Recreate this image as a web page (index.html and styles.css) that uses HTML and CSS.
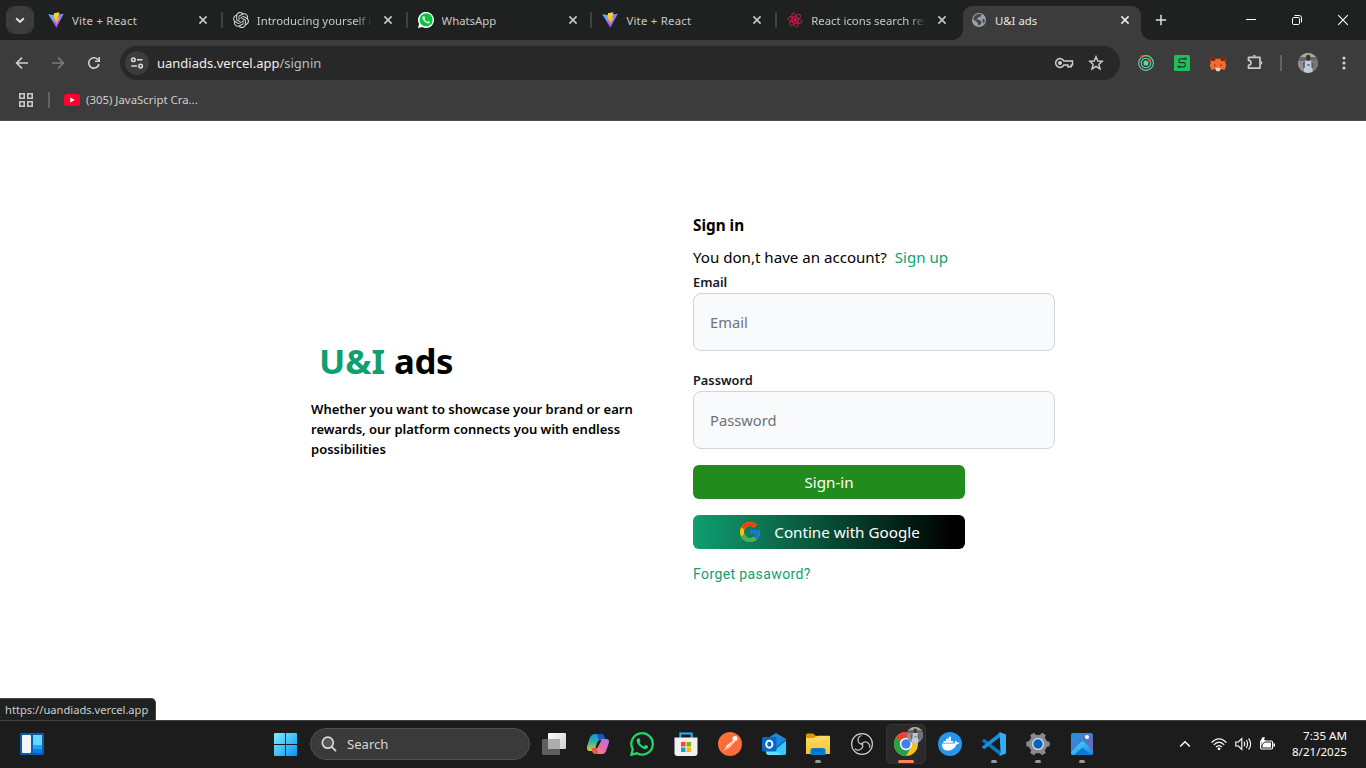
FILE: index.html
```html
<!DOCTYPE html>
<html lang="en">
<head>
<meta charset="utf-8">
<title>U&amp;I ads</title>
<link rel="stylesheet" href="styles.css">
</head>
<body>
<svg class="defs" width="0" height="0">
  <defs>
    <linearGradient id="viteBlue" x1="0" y1="0" x2=".6" y2="1"><stop offset="0" stop-color="#41d1ff"/><stop offset="1" stop-color="#bd34fe"/></linearGradient>
    <linearGradient id="viteGold" x1="0" y1="0" x2="0" y2="1"><stop offset="0" stop-color="#ffdd35"/><stop offset="1" stop-color="#ffa800"/></linearGradient>
    <linearGradient id="winBlue" x1="0" y1="0" x2="1" y2="1"><stop offset="0" stop-color="#7cf0ff"/><stop offset="1" stop-color="#0a93f5"/></linearGradient>
    <linearGradient id="pane" x1="0" y1="0" x2="1" y2="1"><stop offset="0" stop-color="#fff"/><stop offset="1" stop-color="#cfcfcf"/></linearGradient>
    <linearGradient id="copA" x1="0" y1="0" x2="0" y2="1"><stop offset="0" stop-color="#168fe8"/><stop offset=".5" stop-color="#35b6a0"/><stop offset="1" stop-color="#e6cf2e"/></linearGradient>
    <linearGradient id="copB" x1="1" y1="0" x2="0" y2="1"><stop offset="0" stop-color="#a972f0"/><stop offset=".5" stop-color="#ee6aa5"/><stop offset="1" stop-color="#ffa24b"/></linearGradient>
    <linearGradient id="folder" x1="0" y1="0" x2="0" y2="1"><stop offset="0" stop-color="#ffdc6b"/><stop offset="1" stop-color="#fcbf28"/></linearGradient>
    <linearGradient id="photoBg" x1="0" y1="0" x2="1" y2="1"><stop offset="0" stop-color="#169be6"/><stop offset=".6" stop-color="#5a6fc8"/><stop offset="1" stop-color="#9b4fb5"/></linearGradient>
    <linearGradient id="photoHill" x1="0" y1="0" x2="1" y2="1"><stop offset="0" stop-color="#46e3ff"/><stop offset="1" stop-color="#1784de"/></linearGradient>
    <clipPath id="avatarClip"><circle cx="10" cy="10" r="10"/></clipPath>
    <symbol id="vite" viewBox="0 0 16 16">
      <path d="M.3 2.2 5.5 3 8 2.8 15.8 1.8 8.4 15.8Z" fill="url(#viteBlue)"/>
      <path d="M11.4.2 6 1.2 5.5 7.7 7.4 7.3 6.9 10 8.5 9.5 7.8 12.8 11.8 5.7 10 6Z" fill="url(#viteGold)"/>
    </symbol>
    <symbol id="close" viewBox="0 0 10 10"><path d="M1.4 1.4 8.6 8.6M8.6 1.4 1.4 8.6" stroke="currentColor" stroke-width="1.6" fill="none"/></symbol>
    <symbol id="avatar" viewBox="0 0 20 20">
      <g clip-path="url(#avatarClip)">
        <rect width="20" height="20" fill="#8b8c8c"/><rect width="20" height="5" fill="#aaa99d"/>
        <rect y="4" width="20" height="4" fill="#5e6c66"/><rect x="14" y="7" width="6" height="13" fill="#77747d"/><rect y="8" width="5" height="12" fill="#92918f"/>
        <path d="M6 20V10L7.500 7.500H13L14.500 10V20Z" fill="#c3cbe0"/><path d="M5 10 7 8.500 6.700 15H5.300ZM13.300 8.500 15 10V15H13.500Z" fill="#5d545b"/>
        <ellipse cx="10.200" cy="4.800" rx="2.200" ry="3" fill="#3d3337"/><path d="M9 11H12V13H9Z" fill="#7b86ad"/>
      </g>
    </symbol>
  </defs>
</svg>

<header class="browser">
  <div class="tabstrip">
    <div class="tab-search"><svg width="10" height="7" viewBox="0 0 10 7"><path d="M1.2 1.3 5 5 8.8 1.3" fill="none" stroke="#e6e6e6" stroke-width="1.9"/></svg></div>
    <div class="tabs">
      <div class="tab"><svg class="fav"><use href="#vite"/></svg><span class="tab-title wide">Vite + React</span><svg class="x"><use href="#close"/></svg></div>
      <div class="tab"><svg class="fav" viewBox="0 0 24 24" fill="#d6d6d6"><path d="M22.282 9.821a5.985 5.985 0 0 0-.516-4.910 6.046 6.046 0 0 0-6.510-2.900A6.065 6.065 0 0 0 4.981 4.182a5.985 5.985 0 0 0-3.998 2.900 6.046 6.046 0 0 0 .743 7.097 5.980 5.980 0 0 0 .510 4.911 6.051 6.051 0 0 0 6.515 2.900A5.985 5.985 0 0 0 13.260 24a6.056 6.056 0 0 0 5.772-4.206 5.990 5.990 0 0 0 3.997-2.900 6.056 6.056 0 0 0-.747-7.073zM13.260 22.430a4.476 4.476 0 0 1-2.876-1.040l.141-.081 4.779-2.758a.795.795 0 0 0 .392-.681v-6.737l2.020 1.168a.071.071 0 0 1 .038.052v5.583a4.504 4.504 0 0 1-4.494 4.494zM3.600 18.304a4.470 4.470 0 0 1-.535-3.014l.142.085 4.783 2.759a.771.771 0 0 0 .780 0l5.843-3.369v2.332a.080.080 0 0 1-.033.062L9.740 19.950a4.500 4.500 0 0 1-6.140-1.646zM2.340 7.896a4.485 4.485 0 0 1 2.366-1.973V11.600a.766.766 0 0 0 .388.676l5.815 3.355-2.020 1.168a.076.076 0 0 1-.071 0l-4.830-2.786A4.504 4.504 0 0 1 2.340 7.872zm16.597 3.855-5.833-3.387L15.119 7.200a.076.076 0 0 1 .071 0l4.830 2.791a4.494 4.494 0 0 1-.676 8.105v-5.678a.790.790 0 0 0-.407-.667zm2.010-3.023-.141-.085-4.774-2.782a.776.776 0 0 0-.785 0L9.409 9.230V6.897a.066.066 0 0 1 .028-.061l4.830-2.787a4.500 4.500 0 0 1 6.680 4.660zm-12.640 4.135-2.020-1.164a.080.080 0 0 1-.038-.057V6.075a4.500 4.500 0 0 1 7.375-3.453l-.142.080L8.704 5.460a.795.795 0 0 0-.393.681zm1.097-2.365 2.602-1.500 2.607 1.500v2.999l-2.597 1.500-2.607-1.500Z"/></svg><span class="tab-title fade">Introducing yourself in</span><svg class="x"><use href="#close"/></svg></div>
      <div class="tab"><svg class="fav" viewBox="0 0 16 16"><path d="M0 16 1.1 12A8 8 0 1 1 4.2 15Z" fill="#fff"/><circle cx="8.1" cy="7.9" r="6.6" fill="#09c53d"/><path d="M5.3 4.2C3.9 5 4.1 7 6.3 9.2S10.6 12 11.5 10.8C12.2 9.9 11.8 9.7 10.2 8.900L9.300 9.900C8 9.400 7.100 8.500 6.500 7.300L7.200 6.400 6.300 4.300Z" fill="#fff"/></svg><span class="tab-title">WhatsApp</span><svg class="x"><use href="#close"/></svg></div>
      <div class="tab"><svg class="fav"><use href="#vite"/></svg><span class="tab-title wide">Vite + React</span><svg class="x"><use href="#close"/></svg></div>
      <div class="tab last"><svg class="fav" viewBox="0 0 16 16" fill="none" stroke="#d3184f" stroke-width=".9"><ellipse cx="8" cy="8" rx="7.3" ry="2.800" transform="rotate(15 8 8)"/><ellipse cx="8" cy="8" rx="7.3" ry="2.800" transform="rotate(75 8 8)"/><ellipse cx="8" cy="8" rx="7.3" ry="2.800" transform="rotate(135 8 8)"/><circle cx="8" cy="8" r="1.200" fill="#e91e63"/></svg><span class="tab-title fade">React icons search result</span><svg class="x"><use href="#close"/></svg></div>
      <div class="tab active"><svg class="fav" viewBox="0 0 16 16"><circle cx="8" cy="8" r="7" fill="#9ba0a8"/><path d="M8 2.1H10.5L9.8 4.6 7 5.4 6 7.5 8.5 8 10.6 9.5 10 12 7.6 13.7C7 12 7 11 5.2 9.6L2.2 7.2C2.6 4.7 4.5 2.5 8 2.1ZM12 6.5 14 8.5 12.8 11.5 11.3 8.8Z" fill="#44474b"/></svg><span class="tab-title">U&amp;I ads</span><svg class="x"><use href="#close"/></svg></div>
    </div>
    <svg class="new-tab" width="12" height="12" viewBox="0 0 12 12"><path d="M6 .8V11.2M.8 6H11.2" stroke="#dedede" stroke-width="1.5"/></svg>
    <div class="window-buttons">
      <svg width="12" height="12" viewBox="0 0 12 12"><path d="M1 5.5H11" stroke="#fff"/></svg>
      <svg width="12" height="12" viewBox="0 0 12 12" fill="none" stroke="#fff"><rect x="1.5" y="3.5" width="7" height="7" rx="1.2"/><path d="M3.5 1.5H8.3A2.2 2.2 0 0 1 10.5 3.7V8.5"/></svg>
      <svg width="12" height="12" viewBox="0 0 12 12"><path d="M1.2 1.2 10.8 10.8M10.8 1.2 1.2 10.8" stroke="#fff" stroke-width="1.1"/></svg>
    </div>
  </div>

  <div class="toolbar">
    <div class="nav">
      <svg width="16" height="16" viewBox="0 0 16 16" fill="none" stroke="#d0d0d0" stroke-width="1.6"><path d="M14 8H3M8 2.6 2.6 8 8 13.4"/></svg>
      <svg width="16" height="16" viewBox="0 0 16 16" fill="none" stroke="#7a7a7a" stroke-width="1.6"><path d="M2 8H13M8 2.6 13.4 8 8 13.4"/></svg>
      <svg width="16" height="16" viewBox="0 0 16 16" fill="none" stroke="#d0d0d0" stroke-width="1.6"><path d="M13 9A5.2 5.2 0 1 1 11.8 4.5L13.2 6"/><path d="M13.2 2V6.3H9"/></svg>
    </div>
    <div class="omnibox">
      <span class="site-info"><svg width="14" height="14" viewBox="0 0 14 14" fill="none" stroke="#dcdcdc" stroke-width="1.5"><circle cx="3.4" cy="3.8" r="1.8"/><path d="M7 3.8H12.5M1.3 10H7"/><circle cx="10.6" cy="10" r="1.8"/></svg></span>
      <span class="url">uandiads.vercel.app<span class="path">/signin</span></span>
      <svg class="key" width="20" height="14" viewBox="0 0 20 14" fill="none" stroke="#cfcfcf" stroke-width="1.5"><path d="M10 5.1A4.400 4.400 0 1 0 10 8.900H13.800V10.800H17.200V8.900H18.500V5.100Z"/><circle cx="6" cy="7" r="1.300" fill="#cfcfcf"/></svg>
      <svg width="16" height="16" viewBox="0 0 16 16" fill="none" stroke="#d0d0d0" stroke-width="1.4"><path d="M8 1.7 9.8 6 14.4 6.3 10.9 9.3 12 13.9 8 11.4 4 13.9 5.1 9.3 1.6 6.3 6.2 6Z"/></svg>
    </div>
    <div class="extensions">
      <svg width="16" height="16" viewBox="0 0 16 16" fill="none" stroke="#5fdca6" stroke-width="1.1"><circle cx="8" cy="8" r="7.400"/><circle cx="8" cy="8" r="4.800"/><circle cx="8" cy="8" r="2" fill="#5fdca6"/><circle cx="4" cy="1.800" r="1.500" fill="#f4511e" stroke="none"/><circle cx="11.600" cy="5" r="1.600" fill="#f4511e" stroke="none"/></svg>
      <svg width="16" height="16" viewBox="0 0 16 16"><rect width="16" height="16" rx="1.500" fill="#1fbf5c"/><path d="M10.500 3.800H6.300Q4.800 3.800 4.800 5.700T6.300 7.700H10Q11.500 7.700 11.500 9.700T10 11.800H5.500" fill="none" stroke="#143d2b" stroke-width="1.200"/><circle cx="11.400" cy="3.800" r="1.300" fill="#143d2b"/><circle cx="4.800" cy="11.800" r="1.300" fill="#143d2b"/></svg>
      <svg width="18" height="18" viewBox="0 0 16 16" class="fox"><path d="M.7 1 6 4.200H10L15.300 1 14.500 7 15.300 10.500 13.800 14.200 10.600 13.300 9.200 14.800H6.800L5.400 13.300 2.200 14.200.7 10.500 1.500 7Z" fill="#f5672a"/><path d="M.7 1 6 4.200 5 6.200 1.500 6ZM15.300 1 10 4.200 11 6.200 14.500 6Z" fill="#6f2715"/><path d="M5 9.200 6.400 10.300H4.300ZM11 9.200 9.600 10.300H11.700Z" fill="#233447"/><path d="M5.400 12.800 6.800 12.300H9.200L10.600 12.800 9.200 15.400H6.800Z" fill="#dbd7d3"/></svg>
      <svg class="puzzle" width="18" height="18" viewBox="0 0 18 18"><path d="M2.500 4.300H14V15.200H2.500V12.400A2.400 2.400 0 0 0 2.500 7.400Z" fill="none" stroke="#c9c9c9" stroke-width="1.700" stroke-linejoin="round"/><path d="M6.300 3.600A2 2 0 0 1 10.200 3.600ZM14.800 7.800A2 2 0 0 1 14.800 11.700Z" fill="#c9c9c9"/></svg>
    </div>
    <span class="tool-sep"></span>
    <svg class="profile" width="20" height="20"><use href="#avatar"/></svg>
    <svg class="kebab" width="4" height="16" viewBox="0 0 4 16" fill="#d0d0d0"><circle cx="2" cy="3" r="1.6"/><circle cx="2" cy="8" r="1.6"/><circle cx="2" cy="13" r="1.6"/></svg>
  </div>

  <div class="bookmarks">
    <svg width="14" height="14" viewBox="0 0 14 14" fill="none" stroke="#c9c9c9" stroke-width="1.6"><path d="M.8.8H5.2V5.2H.8ZM8.8.8H13.2V5.2H8.8ZM.8 8.8H5.2V13.2H.8ZM8.8 8.8H13.2V13.2H8.8Z"/></svg>
    <span class="book-sep"></span>
    <svg width="16" height="12" viewBox="0 0 16 12"><rect width="16" height="12" rx="2.5" fill="#ff0033"/><path d="M6.3 3.5 10.6 6 6.3 8.5Z" fill="#fff"/></svg>
    <span class="book-text">(305) JavaScript Cra...</span>
  </div>
</header>

<main class="page">
  <section class="intro-panel">
    <h1 class="brand"><span class="brand-mark">U&amp;I</span><span class="brand-ads">ads</span></h1>
    <p class="tagline">Whether you want to showcase your brand or earn<br>rewards, our platform connects you with endless<br>possibilities</p>
  </section>
  <form class="signin">
    <h2 class="heading">Sign in</h2>
    <p class="account"><span class="question">You don,t have an account?</span><a class="signup">Sign up</a></p>
    <label class="label">Email</label>
    <input class="field" type="email" placeholder="Email">
    <label class="label second">Password</label>
    <input class="field" type="password" placeholder="Password">
    <button class="btn primary" type="button">Sign-in</button>
    <button class="btn google" type="button"><svg width="24" height="24" viewBox="0 0 48 48"><path fill="#FFC107" d="M43.6 20H24v8h11.3C33.7 32.7 29.2 36 24 36c-6.6 0-12-5.400-12-12s5.400-12 12-12c3.100 0 5.800 1.200 8 3l5.700-5.700C34 6.100 29.300 4 24 4 13 4 4 13 4 24s9 20 20 20 20-9 20-20c0-1.300-.1-2.700-.4-4z"/><path fill="#FF3D00" d="M6.300 14.700l6.600 4.800C14.700 15.100 19 12 24 12c3.100 0 5.800 1.200 8 3l5.700-5.700C34 6.100 29.300 4 24 4 16.300 4 9.700 8.300 6.300 14.700z"/><path fill="#4CAF50" d="M24 44c5.200 0 9.900-2 13.400-5.200l-6.200-5.200C29.200 35.100 26.700 36 24 36c-5.200 0-9.600-3.300-11.300-8l-6.500 5C9.500 39.600 16.200 44 24 44z"/><path fill="#1976D2" d="M43.6 20H24v8h11.300c-.8 2.200-2.200 4.200-4.100 5.600l6.200 5.200C37 39.200 44 34 44 24c0-1.300-.1-2.700-.4-4z"/></svg><span>Contine with Google</span></button>
    <a class="forgot">Forget pasaword?</a>
  </form>
  <div class="status">https://uandiads.vercel.app</div>
</main>

<footer class="taskbar">
  <svg class="widgets" width="24" height="22" viewBox="0 0 24 22"><rect width="24" height="22" rx="1" fill="#0a5cae"/><rect x="2" y="2" width="9" height="18" rx="1" fill="#f4f4f4"/><path d="M13 2H22V12H13Z" fill="#65d6ff"/><path d="M13 12H22V16H13Z" fill="#18a5ff"/><path d="M13 16H22V20H13Z" fill="#087de5"/></svg>
  <svg class="start" width="23" height="23" viewBox="0 0 23 23" fill="url(#winBlue)"><path d="M0 1Q0 0 1 0H11V11H0ZM12 0H22Q23 0 23 1V11H12ZM0 12H11V23H1Q0 23 0 22ZM12 12H23V22Q23 23 22 23H12Z"/></svg>
  <div class="search"><svg width="16" height="16" viewBox="0 0 16 16" fill="none" stroke="#d9dadc" stroke-width="1.7"><circle cx="6.8" cy="6.700" r="5.500" fill="#555"/><path d="M10.800 10.900 15 15.200"/></svg><span>Search</span></div>
  <div class="apps">
    <div class="app"><svg viewBox="0 0 24 24"><rect x="6" y="1" width="18" height="16" rx="1" fill="url(#pane)"/><rect x="0" y="7" width="18" height="16" rx="1" fill="#5f5f5f"/><path d="M6 7H18V17H6Z" fill="#adadad"/></svg></div>
    <div class="app"><svg viewBox="0 0 24 24"><path d="M6 3Q7 2 9 2H15Q17.500 2 18.300 5L19 8H15Q12 8 11 11L9 17Q8 19 6 19H4Q0 19 1.200 14L3.500 6.500Q4.200 4 6 3Z" fill="url(#copA)"/><path d="M11 2H15Q17.500 2 18.300 5L19 8H14Q12 8 12 5Z" fill="#1b55be"/><path d="M18 21.500Q17 22 15 22H9Q7 22 6.200 19L5.500 16H9Q11 16 12 13L14.500 8.200Q15 7 17 7H20Q24 7 22.800 11L20.500 18Q20 20.500 18 21.500Z" fill="url(#copB)"/><path d="M5.500 16H9Q11 16 11.500 18L12 22H9Q7 22 6.200 19Z" fill="#ed554a"/><path d="M13 8.500 15.500 8.200 11.300 16 9.500 16.500Z" fill="#1d1d1d"/></svg></div>
    <div class="app"><svg viewBox="0 0 24 24"><path d="M1.300 22.700 2.800 17.200A10.700 10.700 0 1 1 7 21.300Z" fill="none" stroke="#25d366" stroke-width="2.300"/><path d="M8 6.200C5.700 7.300 6.500 11 9.500 14S16 18.200 17.700 16C18.700 14.300 18 14 15.500 12.800L14 14.500C12 13.800 10.500 12.500 9.500 10.500L10.600 9 9.500 6.300Z" fill="#25d366"/></svg></div>
    <div class="app"><svg viewBox="0 0 24 24"><path d="M6.300 6V1.600H17.700V6" fill="none" stroke="#29b1f3" stroke-width="2"/><path d="M.5 5.500H23.500V21Q23.500 24 20.500 24H3.500Q.5 24 .5 21Z" fill="#f1f1f1"/><path d="M7 10H11.500V14.500H7Z" fill="#f25022"/><path d="M12.500 10H17V14.500H12.500Z" fill="#7fba00"/><path d="M7 15.500H11.500V20H7Z" fill="#00a4ef"/><path d="M12.500 15.500H17V20H12.500Z" fill="#ffb900"/></svg></div>
    <div class="app"><svg viewBox="0 0 24 24"><circle cx="12" cy="12" r="12" fill="#ff6c37"/><circle cx="17" cy="6.500" r="2.500" fill="#fff"/><path d="M15.700 8 17 9.200 12 15 5.500 19 9 13.200Z" fill="#fff"/><path d="M5.500 19 15 10" stroke="#ff8c62" stroke-width=".8"/></svg></div>
    <div class="app"><svg viewBox="0 0 24 24"><path d="M4 7 14 1.200 24 7V21Q24 23 22 23H7Q4 23 4 20Z" fill="#126fcc"/><path d="M14 1.200 24 7 14 15 6 6Z" fill="#188ad8"/><path d="M24 9V21Q24 23 22 23H7Z" fill="#35cbfa"/><path d="M4 14 20 23H7Q4 23 4 20Z" fill="#62defa"/><rect y="5" width="14.500" height="14.500" rx="1.500" fill="#0868c9"/><ellipse cx="7.300" cy="12.200" rx="3.100" ry="3.600" fill="none" stroke="#fff" stroke-width="1.900"/></svg></div>
    <div class="app running"><svg viewBox="0 0 24 24"><path d="M0 3Q0 1.500 1.500 1.500H7L10 4V9H0Z" fill="#d99b00"/><path d="M0 6H8L11 3.800H23Q24 3.800 24 5V22H0Z" fill="url(#folder)"/><path d="M4.500 23V18.500Q4.500 16 7 16H17Q19.500 16 19.500 18.500V23Z" fill="#087bd1"/><path d="M8 18.800H16" stroke="#0757a0" stroke-width="1"/></svg></div>
    <div class="app"><svg viewBox="0 0 24 24" fill="none"><circle cx="12" cy="12" r="10.400" fill="#171717" stroke="#d0d0d0" stroke-width="1.200"/><g stroke="#bcbcbc" stroke-width="1.300"><path id="obs" d="M11.500 3.500C8 4.500 6.800 8.500 9.300 11.300L12 12.500"/><use href="#obs" transform="rotate(120 12 12)"/><use href="#obs" transform="rotate(240 12 12)"/></g><circle cx="12" cy="12" r="1.300" fill="#bcbcbc"/></svg></div>
    <div class="app chrome"><svg viewBox="0 0 24 24"><circle cx="12" cy="12" r="12" fill="#fbc116"/><path d="M12 12 1.600 6A12 12 0 0 1 22.400 6Z" fill="#ea4335"/><path d="M12 12 1.600 6A12 12 0 0 0 12 24L17.200 15Z" fill="#28a148"/><path d="M12 6H22.400" stroke="#ea4335" stroke-width="1"/><circle cx="12" cy="12" r="6.200" fill="#fff"/><circle cx="12" cy="12" r="4.700" fill="#3b82f0"/></svg><svg class="badge" viewBox="0 0 20 20"><use href="#avatar"/></svg></div>
    <div class="app"><svg viewBox="0 0 24 24"><circle cx="12" cy="12" r="12" fill="#2496ed"/><path d="M4 11.500H16.500C17.200 10.600 17 9.200 17.500 8.700 18.700 9.300 18.800 10.200 19.700 10.400L21.500 10.700C21 12 19.500 12.300 18.500 12.500C16.500 17 13.500 18.700 9 18.500 5.500 18.300 3.900 15.500 4 11.500Z" fill="#fff"/><path d="M5.500 9.900H15.300M8 7.700H13M10.700 5.800H13" stroke="#fff" stroke-width="1.900"/></svg></div>
    <div class="app running"><svg viewBox="0 0 24 24"><path d="M0 8.500 2.200 6.700 18.500 19.200V24L0 9.300Z" fill="#0877bd"/><path d="M0 15.500 2.200 17.300 18.500 4.800V0L0 14.700Z" fill="#1591df"/><path d="M17.500 0 24 2.600V21.400L17.500 24 18.500 20Z" fill="#30aef5"/></svg></div>
    <div class="app running"><svg viewBox="0 0 24 24"><g fill="#858b92"><circle cx="12" cy="12" r="9.300"/><path id="tooth" d="M9 4 9.800.3H14.200L15 4V20L14.200 23.700H9.800L9 20Z" transform="rotate(30 12 12)"/><use href="#tooth" transform="rotate(60 12 12)"/><use href="#tooth" transform="rotate(120 12 12)"/></g><circle cx="12" cy="12" r="6" fill="#dfe3e7"/><circle cx="12" cy="12" r="4.700" fill="#0864b5"/></svg></div>
    <div class="app running"><svg viewBox="0 0 24 24"><rect x="1" y="1" width="22" height="22" rx="2" fill="url(#photoBg)"/><path d="M1 20 11 10Q12.500 8.500 14 10L23 18.500V21Q23 23 21 23H3Q1 23 1 21Z" fill="url(#photoHill)"/><path d="M4 23 12.500 15.500 21 23Z" fill="#1278d0"/><circle cx="17" cy="5" r="2.100" fill="#fff"/></svg></div>
  </div>
  <div class="tray">
    <svg class="up" width="12" height="8" viewBox="0 0 12 8"><path d="M1.200 6.500 6 1.700 10.800 6.500" fill="none" stroke="#fff" stroke-width="1.500"/></svg>
    <svg width="16" height="14" viewBox="0 0 16 14" fill="none" stroke="#fff" stroke-width="1.200"><path d="M.6 5.500Q8-2 15.400 5.500M2.800 7.900Q8 2.500 13.200 7.900M5 10.100Q8 7 11 10.100"/><circle cx="8" cy="11.800" r="1.400" fill="#fff" stroke="none"/></svg>
    <svg width="17" height="14" viewBox="0 0 17 14" fill="none" stroke="#fff" stroke-width="1.100"><path d="M.8 5H3.400L6.800 1.600V12.400L3.400 9H.8ZM9 4.800Q10.200 7 9 9.200M11.300 3Q13.700 7 11.300 11M13.600 1.400Q17.600 7 13.600 12.600"/></svg>
    <svg width="17" height="14" viewBox="0 0 17 14"><rect x="1.600" y="4" width="12" height="8" rx="1.500" fill="none" stroke="#fff" stroke-width="1.200"/><path d="M5.500 5.500H12V10.500H3.500V8ZM14.500 6.500H16V9.500H14.500ZM3.500.3H6L5 3H7L2 8.500 2.800 5H.8Z" fill="#fff"/></svg>
    <div class="clock"><span>7:35 AM</span><span class="date">8/21/2025</span></div>
  </div>
</footer>
</body>
</html>
```
FILE: styles.css
```css
* { box-sizing: border-box; }
body { margin: 0; width: 1366px; height: 768px; overflow: hidden; display: flex; flex-direction: column; background: #fff; font-family: "Noto Sans", "Open Sans", sans-serif; font-size: 15px; }
svg { flex: none; display: block; }
h1, h2, p { margin: 0; }
.defs { position: absolute; }
span, a, label { white-space: nowrap; }

.browser { height: 121px; background: #3c3c3c; border-bottom: 1px solid #4b4d4f; }
.tabstrip { height: 40px; background: #1f2120; display: flex; align-items: center; padding-left: 6px; }
.tab-search { width: 28px; height: 28px; border-radius: 9px; background: #3c3c3c; display: grid; place-items: center; }
.tabs { display: flex; margin-left: 4px; height: 40px; }
.tab { position: relative; width: 184.800px; height: 40px; display: flex; align-items: center; padding-left: 10px; color: #c8c9c8; font-size: 11.350px; }
.tab:not(.active):not(.last)::after { content: ""; position: absolute; right: 0; top: 12px; width: 2px; height: 16px; background: #414342; border-radius: 1px; }
.fav { width: 16px; height: 16px; }
.tab-title { width: 115px; margin-left: 8px; overflow: hidden; line-height: 20px; padding-top: 1px; }
.wide { letter-spacing: .25px; }
.fade { -webkit-mask-image: linear-gradient(90deg, #000 86%, transparent 100%); mask-image: linear-gradient(90deg, #000 86%, transparent 100%); }
.x { width: 10px; height: 10px; margin-left: 11px; }
.active { width: 178px; margin-left: 1px; padding-left: 8px; height: 34px; margin-top: 6px; padding-bottom: 6px; background: #3c3c3c; border-radius: 9px 9px 0 0; color: #e8e8e8; }
.active .x { margin-left: 10px; }
.active::before, .active::after { content: ""; position: absolute; bottom: 0; width: 10px; height: 10px; }
.active::before { left: -10px; background: radial-gradient(circle at 0 0, transparent 9.500px, #3c3c3c 10px); }
.active::after { right: -10px; background: radial-gradient(circle at 100% 0, transparent 9.500px, #3c3c3c 10px); }
.new-tab { margin-left: 14px; }
.window-buttons { display: flex; gap: 34px; margin-left: auto; padding-right: 17px; }

.toolbar { height: 46px; display: flex; align-items: center; background: #3c3c3c; }
.nav { display: flex; gap: 20px; padding-left: 14px; width: 120px; }
.omnibox { width: 1000px; height: 34px; border-radius: 17px; background: #282828; display: flex; align-items: center; padding: 0 16px 0 5px; }
.site-info { width: 24px; height: 24px; border-radius: 50%; background: #3c3c3c; display: grid; place-items: center; }
.url { margin-left: 8px; font-size: 13px; color: #f0f0f0; }
.path { color: #bdbdbd; }
.key { margin-left: auto; margin-right: 14px; }
.extensions { display: flex; align-items: center; gap: 20px; margin-left: 18px; }
.fox { margin: 0 -1px; }
.puzzle { margin-top: -2px; }
.tool-sep { width: 2px; height: 16px; background: #626262; margin-left: 16px; }
.profile { margin-left: 16px; }
.kebab { margin-left: 24px; }
.bookmarks { height: 28px; display: flex; align-items: center; padding-left: 19px; color: #cfcfcf; font-size: 11.400px; }
.book-sep { width: 2px; height: 16px; margin: 0 14px 0 15px; background: #626262; }
.book-text { margin-left: 6px; margin-top: -2px; }

.page { position: relative; height: 599px; display: flex; align-items: flex-start; padding-left: 311px; }
.intro-panel { width: 382px; padding-top: 219px; }
.brand { display: flex; gap: 9px; padding-left: 8px; font-size: 34.800px; line-height: 42px; font-weight: 700; }
.brand-mark { color: #109f70; }
.brand-ads { letter-spacing: -.4px; }
.tagline { margin-top: 17px; font-size: 13px; font-weight: 600; line-height: 20px; color: #000; }
.signin { width: 362px; padding-top: 92px; display: flex; flex-direction: column; }
.heading { font-size: 15.300px; line-height: 24px; }
.account { margin-top: 8px; font-size: 15.100px; line-height: 24px; display: flex; gap: 8px; }
.signup, .forgot { color: #109f70; }
.label { margin: 3px 0 1px; font-size: 12.800px; font-weight: 600; line-height: 20px; color: #111827; }
.second { margin-top: 19px; }
.field { height: 58px; border: 1px solid #d1d5db; border-radius: 8px; background: #f9fafb; padding: 0 16px; font: 14.700px "Noto Sans", sans-serif; }
.field::placeholder { color: #6b7280; opacity: 1; }
.btn { width: 272px; height: 34px; margin-top: 16px; padding: 0; border: 0; border-radius: 6px; color: #fff; font: 15.200px "Noto Sans", sans-serif; }
.primary { background: #228b1e; }
.google { display: flex; align-items: center; justify-content: center; gap: 12px; background: linear-gradient(90deg, #109f70, #000 96%); }
.forgot { margin-top: 15px; font-family: Roboto, sans-serif; font-size: 14px; letter-spacing: .4px; line-height: 20px; }
.status { position: absolute; left: 0; bottom: 0; width: 156px; height: 22px; padding-left: 5px; border: 1px solid #434544; border-left: 0; border-bottom: 0; border-radius: 0 5px 0 0; background: #1f2120; color: #cfcfcf; font-size: 11.150px; line-height: 22px; }

.taskbar { height: 48px; border-top: 1px solid #434343; background: #1c1c1c; display: flex; align-items: center; padding-bottom: 1px; color: #fff; }
.widgets { margin-left: 20px; }
.start { margin-left: 230px; }
.search { width: 220px; height: 32px; margin-left: 13px; border: 1px solid #505050; border-radius: 16px; background: #3a3a3a; display: flex; align-items: center; gap: 10px; padding-left: 10px; color: #d6d6d6; font-size: 13.100px; }
.apps { display: flex; margin-left: 2px; }
.app { position: relative; width: 44px; height: 40px; display: grid; place-items: center; }
.app > svg { width: 24px; height: 24px; }
.running::after, .chrome::after { content: ""; position: absolute; bottom: 1px; left: 19px; width: 6px; height: 3px; border-radius: 2px; background: #999; }
.chrome { width: 40px; margin: 0 2px; background: #2a2a2a; border: 1px solid #333; border-radius: 5px; }
.chrome::after { left: 11px; bottom: 0; width: 16px; background: #ff8061; }
.app .badge { position: absolute; width: 16px; height: 16px; left: 20px; top: 2px; }
.tray { display: flex; align-items: center; margin-left: auto; gap: 8px; padding-right: 19px; }
.up { margin-right: 12px; }
.clock { width: 64px; display: flex; flex-direction: column; align-items: flex-end; font-size: 11.600px; line-height: 16px; }
.tray > svg:nth-child(4) { margin-left: -1px; }
.clock { margin-left: 0; flex: none; width: 63px; }
```
